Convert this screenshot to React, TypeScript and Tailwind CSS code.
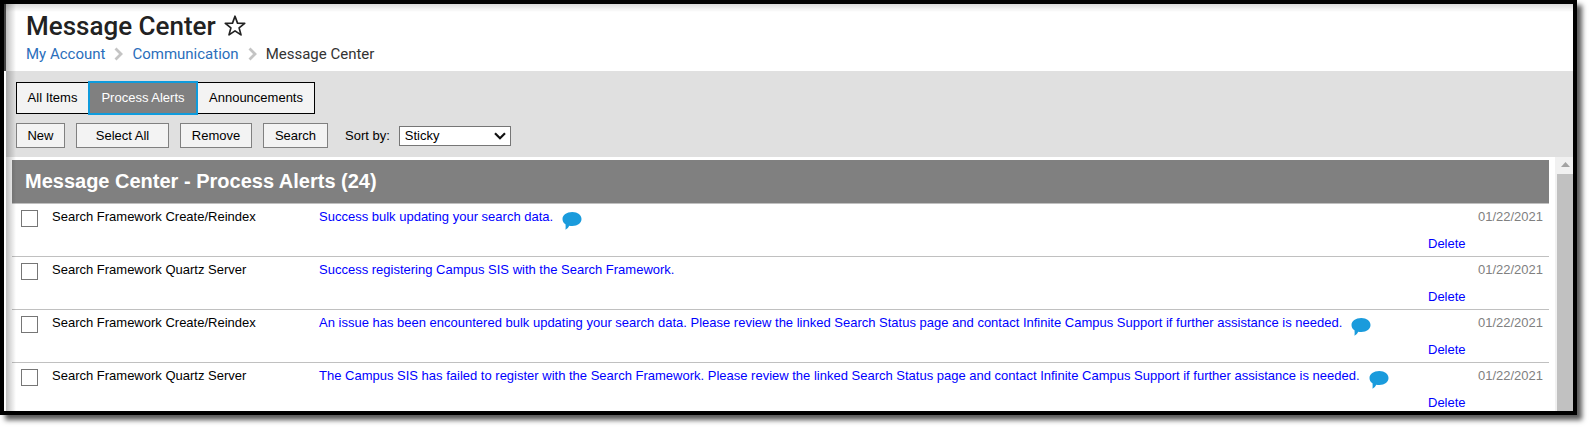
interface Alert {
    id: number,
    process: string,
    message: string,
    hasComment: boolean,
    date: string,
}

const alerts: Alert[] = [
    { id: 1, process: 'Search Framework Create/Reindex', message: 'Success bulk updating your search data.', hasComment: true, date: '01/22/2021' },
    { id: 2, process: 'Search Framework Quartz Server', message: 'Success registering Campus SIS with the Search Framework.', hasComment: false, date: '01/22/2021' },
    { id: 3, process: 'Search Framework Create/Reindex', message: 'An issue has been encountered bulk updating your search data. Please review the linked Search Status page and contact Infinite Campus Support if further assistance is needed.', hasComment: true, date: '01/22/2021' },
    { id: 4, process: 'Search Framework Quartz Server', message: 'The Campus SIS has failed to register with the Search Framework. Please review the linked Search Status page and contact Infinite Campus Support if further assistance is needed.', hasComment: true, date: '01/22/2021' },
];

function StarIcon() {
    return <svg className="size-6" viewBox="0 0 24 24" fill="none" stroke="#222" strokeWidth="1.7" strokeLinejoin="round">
        <path d="M12 2.200l2.500 6.900 7.200.3-5.600 4.500 1.900 7-6-4-6 4 1.900-7-5.600-4.500 7.200-.3z" />
    </svg>;
}

function Chevron() {
    return <svg className="h-[14px] w-[9px]" viewBox="0 0 9 14" fill="none" stroke="#c4c4c4" strokeWidth="2.8">
        <path d="M1.500 1.500L7 7l-5.500 5.500" />
    </svg>;
}

function CommentIcon() {
    return <svg className="mt-1 h-[18px] w-5 shrink-0" viewBox="0 0 20 18" fill="#1a9bdc">
        <path d="M10.300 0C15.700 0 19.500 3 19.500 7s-3.800 7-9.200 7c-1.200 0-2-.1-3-.3C6.500 15.200 5.500 16.600 3.500 17.700c.2-1.800.2-3.500 0-5.400C1.400 11 .5 9.200.5 7 .5 3 4.700 0 10.300 0z" />
    </svg>;
}

function Header() {
    return <header className="flex h-[67px] shrink-0 flex-col border-l-2 border-[#444] bg-white pt-[7px] pl-5 font-[Roboto,sans-serif]">
        <div className="flex items-center gap-[7px]">
            <h1 className="text-[26px] leading-[30px] font-medium text-[#222]">Message Center</h1>
            <button type="button" aria-label="Add to favorites"><StarIcon /></button>
        </div>
        <nav aria-label="Breadcrumb" className="flex items-center gap-[9px] text-[15px] leading-[26px] text-[#333]">
            <a href="#account" className="text-[#2a6ebb]">My Account</a>
            <Chevron />
            <a href="#communication" className="text-[#2a6ebb]">Communication</a>
            <Chevron />
            <span>Message Center</span>
        </nav>
    </header>;
}

function Toolbar() {
    const button = 'h-[25px] border border-[#808080] bg-[#f3f3f3]';
    return <div className="ml-[2px] flex h-[86px] shrink-0 flex-col bg-[#e0e0e0] pt-[10px] pl-[10px]">
        <div className="flex items-center">
            <button type="button" className="h-8 w-[72px] border border-r-0 border-black bg-[#f3f3f3]">All Items</button>
            <button type="button" aria-pressed="true" className="h-[34px] w-[110px] border-2 border-[#0f9bdc] bg-[#808080] text-white">Process Alerts</button>
            <button type="button" className="h-8 w-[117px] border border-l-0 border-black bg-[#f3f3f3]">Announcements</button>
        </div>
        <div className="mt-2 flex items-center gap-[11px]">
            <button type="button" className={`${button} w-[49px]`}>New</button>
            <button type="button" className={`${button} w-[93px]`}>Select All</button>
            <button type="button" className={`${button} w-[72px]`}>Remove</button>
            <button type="button" className={`${button} w-[65px]`}>Search</button>
            <label htmlFor="sort" className="ml-[6px]">Sort by:</label>
            <div className="relative -ml-[2px]">
                <select id="sort" className="block h-5 w-28 appearance-none border border-[#767676] bg-white pl-[5px] leading-4">
                    <option>Sticky</option>
                </select>
                <svg className="pointer-events-none absolute top-[6px] right-[5px] h-2 w-3" viewBox="0 0 12 8" fill="none" stroke="#111" strokeWidth="2.2">
                    <path d="M1 1.300l5 5 5-5" />
                </svg>
            </div>
        </div>
    </div>;
}

function AlertRow({ id, process, message, hasComment, date }: Alert) {
    return <tr className="h-[53px] border-t border-[#c0c0c0] align-top">
        <td className="pt-[6px] pl-[9px]">
            <input id={`alert-${id}`} type="checkbox" className="block size-[17px] appearance-none border border-[#767676] bg-white checked:bg-[#808080]" />
        </td>
        <td className="pt-1 leading-[18px]">
            <label htmlFor={`alert-${id}`}>{process}</label>
        </td>
        <td className="pt-1 leading-[18px]">
            <div className="flex gap-[9px]">
                <a href="#message" className="whitespace-nowrap text-[#0000ff]">{message}</a>
                {hasComment && <CommentIcon />}
            </div>
        </td>
        <td className="pt-1 pr-[6px] leading-[18px]">
            <div className="text-right text-[#808080]">{date}</div>
            <button type="button" className="mt-[9px] block text-[#0000ff]">Delete</button>
        </td>
    </tr>;
}

function Scrollbar() {
    return <div className="flex w-[18px] shrink-0 flex-col bg-[#f1f1f1] pl-[2px]">
        <svg className="h-[17px] w-4 shrink-0" viewBox="0 0 16 17" fill="#a3a3a3">
            <path d="M4 10l4.500-5 4.500 5z" />
        </svg>
        <div className="grow bg-[#c1c1c1]" />
    </div>;
}

export default function App() {
    return <div className="h-screen bg-white pr-[15px] pb-[15px] font-['Liberation_Sans',Arial,sans-serif] text-[13px] text-black">
        <div className="relative flex h-full flex-col overflow-hidden border-4 border-black bg-white shadow-[5px_5px_5px_rgba(0,0,0,0.65)]">
            <Header />
            <Toolbar />
            <main className="flex min-h-0 grow">
                <div className="min-w-0 grow overflow-hidden pt-[3px] pr-[6px] pl-2">
                    <h2 className="h-[43px] bg-[#808080] pl-[13px] text-[20px] leading-[42px] font-bold text-white">Message Center - Process Alerts (24)</h2>
                    <table className="w-full table-fixed border-collapse">
                        <colgroup>
                            <col className="w-10" />
                            <col className="w-[267px]" />
                            <col />
                            <col className="w-[121px]" />
                        </colgroup>
                        <tbody>
                            {alerts.map(alert => <AlertRow key={alert.id} {...alert} />)}
                        </tbody>
                    </table>
                </div>
                <Scrollbar />
            </main>
            <div className="pointer-events-none absolute inset-y-0 left-[2px] w-[10px] bg-linear-to-r from-black/25 to-transparent" />
            <div className="pointer-events-none absolute inset-x-0 top-0 h-2 bg-linear-to-b from-black/15 to-transparent" />
        </div>
    </div>;
}
